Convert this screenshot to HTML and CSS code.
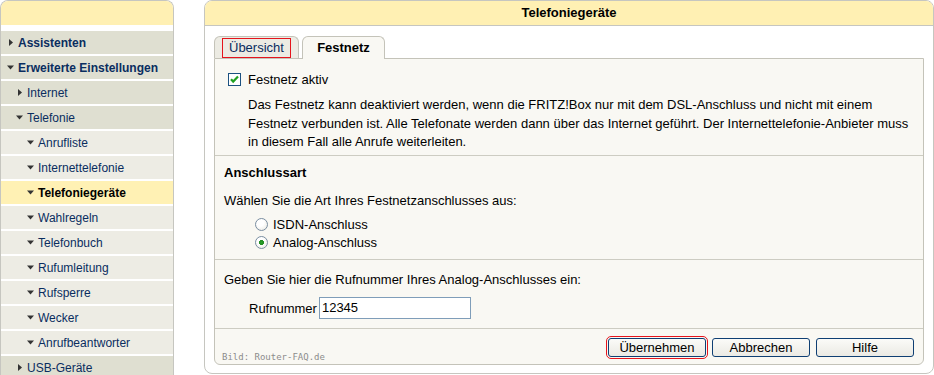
FILE: index.html
```html
<!DOCTYPE html>
<html lang="de">
<head>
<meta charset="utf-8">
<title>Telefoniegeräte</title>
<link rel="stylesheet" href="styles.css">
</head>
<body>
<nav class="sidebar">
  <div class="sb-head"></div>
  <ul class="menu">
    <li class="item l0 dark"><span class="arr"><svg width="7" height="7" viewBox="0 0 7 7"><polygon points="2,0 6,3.5 2,7" /></svg></span><span class="lbl b">Assistenten</span></li>
    <li class="item l0 dark"><span class="arr"><svg width="7" height="7" viewBox="0 0 7 7"><polygon points="0,1.5 7,1.5 3.5,5.5" /></svg></span><span class="lbl b">Erweiterte Einstellungen</span></li>
    <li class="item l1 dark"><span class="arr"><svg width="7" height="7" viewBox="0 0 7 7"><polygon points="2,0 6,3.5 2,7" /></svg></span><span class="lbl">Internet</span></li>
    <li class="item l1 dark"><span class="arr"><svg width="7" height="7" viewBox="0 0 7 7"><polygon points="0,1.5 7,1.5 3.5,5.5" /></svg></span><span class="lbl">Telefonie</span></li>
    <li class="item l2"><span class="arr"><svg width="7" height="7" viewBox="0 0 7 7"><polygon points="0,1.5 7,1.5 3.5,5.5" /></svg></span><span class="lbl">Anrufliste</span></li>
    <li class="item l2"><span class="arr"><svg width="7" height="7" viewBox="0 0 7 7"><polygon points="0,1.5 7,1.5 3.5,5.5" /></svg></span><span class="lbl">Internettelefonie</span></li>
    <li class="item l2 active"><span class="arr"><svg width="7" height="7" viewBox="0 0 7 7"><polygon points="0,1.5 7,1.5 3.5,5.5" /></svg></span><span class="lbl b">Telefoniegeräte</span></li>
    <li class="item l2"><span class="arr"><svg width="7" height="7" viewBox="0 0 7 7"><polygon points="0,1.5 7,1.5 3.5,5.5" /></svg></span><span class="lbl">Wahlregeln</span></li>
    <li class="item l2"><span class="arr"><svg width="7" height="7" viewBox="0 0 7 7"><polygon points="0,1.5 7,1.5 3.5,5.5" /></svg></span><span class="lbl">Telefonbuch</span></li>
    <li class="item l2"><span class="arr"><svg width="7" height="7" viewBox="0 0 7 7"><polygon points="0,1.5 7,1.5 3.5,5.5" /></svg></span><span class="lbl">Rufumleitung</span></li>
    <li class="item l2"><span class="arr"><svg width="7" height="7" viewBox="0 0 7 7"><polygon points="0,1.5 7,1.5 3.5,5.5" /></svg></span><span class="lbl">Rufsperre</span></li>
    <li class="item l2"><span class="arr"><svg width="7" height="7" viewBox="0 0 7 7"><polygon points="0,1.5 7,1.5 3.5,5.5" /></svg></span><span class="lbl">Wecker</span></li>
    <li class="item l2"><span class="arr"><svg width="7" height="7" viewBox="0 0 7 7"><polygon points="0,1.5 7,1.5 3.5,5.5" /></svg></span><span class="lbl">Anrufbeantworter</span></li>
    <li class="item l1 dark"><span class="arr"><svg width="7" height="7" viewBox="0 0 7 7"><polygon points="2,0 6,3.5 2,7" /></svg></span><span class="lbl">USB-Geräte</span></li>
  </ul>
</nav>

<main class="panel">
  <h1 class="panel-head">Telefoniegeräte</h1>
  <div class="panel-body">
    <div class="tabs">
      <div class="tab"><span class="mark">Übersicht</span></div>
      <div class="tab active">Festnetz</div>
    </div>
    <div class="content">
      <section class="sec s1">
        <div class="check-row">
          <span class="checkbox"><svg width="11" height="11" viewBox="0 0 11 11"><path d="M2 5.2 L4.2 7.6 L9 2.6" fill="none" stroke="#21a121" stroke-width="2.2"/></svg></span>
          <span>Festnetz aktiv</span>
        </div>
        <p class="desc">Das Festnetz kann deaktiviert werden, wenn die FRITZ!Box nur mit dem DSL-Anschluss und nicht mit einem<br>Festnetz verbunden ist. Alle Telefonate werden dann über das Internet geführt. Der Internettelefonie-Anbieter muss<br>in diesem Fall alle Anrufe weiterleiten.</p>
      </section>
      <section class="sec s2">
        <h2 class="sec-title">Anschlussart</h2>
        <p class="line">Wählen Sie die Art Ihres Festnetzanschlusses aus:</p>
        <div class="radios">
          <div class="radio-row"><span class="radio"></span><span>ISDN-Anschluss</span></div>
          <div class="radio-row"><span class="radio on"></span><span>Analog-Anschluss</span></div>
        </div>
      </section>
      <section class="sec s3">
        <p class="line">Geben Sie hier die Rufnummer Ihres Analog-Anschlusses ein:</p>
        <div class="field-row">
          <label class="field-label">Rufnummer</label>
          <span class="input">12345</span>
        </div>
      </section>
      <section class="sec s4">
        <div class="buttons">
          <span class="btn hl">Übernehmen</span>
          <span class="btn">Abbrechen</span>
          <span class="btn">Hilfe</span>
        </div>
        <span class="credit">Bild: Router-FAQ.de</span>
      </section>
    </div>
  </div>
</main>
</body>
</html>
```

FILE: styles.css
```css
* { box-sizing: border-box; }

body {
  margin: 0;
  display: flex;
  align-items: flex-start;
  font-family: "Liberation Sans", Arial, sans-serif;
  font-size: 13px;
  color: #000;
  background: #fff;
  overflow: hidden;
}

/* ---------- sidebar ---------- */
.sidebar {
  flex: none;
  width: 174px;
  height: 390px;
  border: 1px solid #c6c6c0;
  border-bottom: none;
  border-radius: 8px 8px 0 0;
}

.sb-head {
  height: 24px;
  margin-bottom: 6px;
  background: #fff0b3;
  border-radius: 7px 7px 0 0;
}

.menu {
  list-style: none;
  margin: 0;
  padding: 0;
}

.item {
  display: flex;
  align-items: center;
  height: 23px;
  margin-bottom: 2px;
  background: #edece4;
  color: #0a2d5f;
  font-size: 12px;
}

.item.dark { background: #dfdfd1; }
.item.active { background: #fff1b4; color: #000; }

.item.l0 { padding-left: 6px; }
.item.l1 { padding-left: 15px; }
.item.l2 { padding-left: 26px; }

.arr {
  display: flex;
  width: 7px;
  height: 7px;
  margin-right: 4px;
}
.arr svg { fill: #333; display: block; }

.lbl.b { font-weight: bold; }

/* ---------- main panel ---------- */
.panel {
  flex: none;
  margin-left: 30px;
  width: 730px;
  height: 374px;
  border: 1px solid #c6c6c0;
  border-radius: 8px;
  background: #fff;
}

.panel-head {
  margin: 0;
  height: 25px;
  border-bottom: 1px solid #c6c6c0;
  border-radius: 7px 7px 0 0;
  background: #fff0b3;
  font-size: 13px;
  font-weight: bold;
  line-height: 24px;
  text-align: center;
}

.panel-body {
  padding: 10px 9px 8px 9px;
}

.tabs {
  display: flex;
  align-items: flex-end;
  height: 22px;
}

.tab {
  display: flex;
  align-items: center;
  height: 22px;
  border: 1px solid #c4c3b9;
  border-bottom: none;
  border-radius: 6px 6px 0 0;
  background: #ecebe3;
  color: #0a2d5f;
}

.tab:first-child {
  width: 85px;
  padding-left: 7px;
}

.mark {
  display: inline-block;
  height: 20px;
  line-height: 18px;
  padding: 0 6px;
  border: 1px solid #e5141c;
}

.tab.active {
  position: relative;
  z-index: 1;
  width: 83px;
  height: 23px;
  margin-left: 3px;
  margin-bottom: -1px;
  justify-content: center;
  padding-bottom: 1px;
  background: #f9f8f3;
  color: #000;
  font-weight: bold;
}

.content {
  position: relative;
  height: 307px;
  border: 1px solid #c4c3b9;
  border-radius: 0 0 6px 6px;
  background: #f9f8f3;
}

.sec {
  border-bottom: 1px solid #cdccc2;
  padding-left: 9px;
}

.s1 {
  height: 97px;
  padding: 14px 0 0 13px;
}

.check-row {
  display: flex;
  align-items: center;
  height: 13px;
  line-height: 13px;
}

.checkbox {
  display: flex;
  align-items: center;
  justify-content: center;
  width: 13px;
  height: 13px;
  margin-right: 7px;
  border: 1px solid #1c5180;
  background: #fff;
}

.desc {
  margin: 10px 0 0 20px;
  line-height: 18.5px;
  white-space: nowrap;
}

.s2 {
  height: 104px;
  padding-top: 9px;
}

.sec-title {
  margin: 0;
  font-size: 13px;
  font-weight: bold;
  line-height: 16px;
}

.line {
  margin: 0;
  line-height: 16px;
}

.s2 .line { margin-top: 12px; }

.radios {
  margin: 7px 0 0 31px;
}

.radio-row {
  display: flex;
  align-items: center;
  height: 17px;
  margin-bottom: 1px;
}

.radio {
  width: 13px;
  height: 13px;
  margin-right: 5px;
  border: 1px solid #7a8ea1;
  border-radius: 50%;
  background: radial-gradient(circle at 40% 35%, #ffffff 0, #ffffff 35%, #e6e5de 100%);
}

.radio.on {
  background:
    radial-gradient(circle, #2aa22a 0, #1e8a1e 2.2px, transparent 2.8px),
    radial-gradient(circle at 40% 35%, #ffffff 0, #ffffff 35%, #e6e5de 100%);
}

.s3 {
  height: 69px;
  padding-top: 12px;
}

.field-row {
  display: flex;
  align-items: center;
  margin: 9px 0 0 25px;
}

.field-label { margin-right: 2px; }

.input {
  width: 152px;
  height: 22px;
  padding-left: 2px;
  line-height: 20px;
  border: 1px solid #7f9db9;
  background: #fff;
}

.s4 {
  border-bottom: none;
  height: 35px;
  padding: 9px 9px 0 0;
}

.buttons {
  display: flex;
  justify-content: flex-end;
  gap: 6px;
}

.btn {
  width: 98px;
  height: 19px;
  line-height: 17px;
  text-align: center;
  border: 1px solid #0f3f73;
  border-radius: 3px;
  background: linear-gradient(#fbfbf8, #ebeae4);
}

.btn.hl {
  outline: 1px solid #e5141c;
  outline-offset: 1px;
}

.credit {
  position: absolute;
  left: 7px;
  bottom: 2px;
  font-family: "DejaVu Sans Mono", monospace;
  font-size: 9px;
  line-height: 10px;
  color: #8c8c8c;
}
```
